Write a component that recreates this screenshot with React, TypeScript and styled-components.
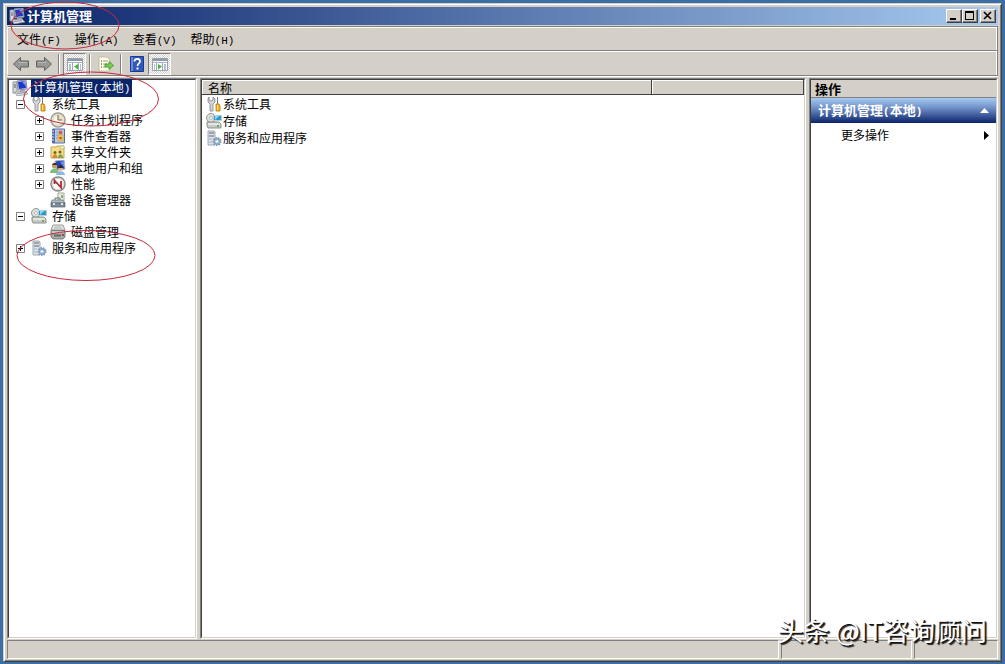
import React from 'react';
import styled, { createGlobalStyle, css } from 'styled-components';

const FACE = '#d4d0c8';
const SHADOW = '#808080';
const DARK = '#404040';
const NAVY = '#0a246a';

const GlobalStyle = createGlobalStyle`
  *, *::before, *::after { box-sizing: border-box; }
  html, body, #root { height: 100%; margin: 0; }
  body {
    background: #3a6ea5;
    color: #000;
    font-family: "Noto Sans CJK SC", "Liberation Sans", sans-serif;
    font-size: 12px;
    line-height: 16px;
  }
  button { font: inherit; color: inherit; margin: 0; padding: 0; border: 0; background: none; }
  svg { display: block; flex: none; }
`;

const raised = css`
  border: 1px solid;
  border-color: #fff ${DARK} ${DARK} #fff;
  box-shadow: inset -1px -1px ${SHADOW};
`;

const Desktop = styled.div`
  position: relative;
  display: flex;
  min-height: 100%;
  padding: 3px 3px 2px;
`;

const Window = styled.main`
  flex: 1;
  min-width: 0;
  display: flex;
  flex-direction: column;
  padding: 3px 3px 2px;
  background: ${FACE};
  border: 1px solid;
  border-color: ${FACE} ${DARK} ${DARK} ${FACE};
  box-shadow: inset 1px 1px #fff, inset -1px -1px ${SHADOW};
`;

const TitleBar = styled.header`
  display: flex;
  align-items: center;
  height: 18px;
  padding: 0 2px;
  gap: 2px;
  background: linear-gradient(90deg, ${NAVY}, #a6caf0);
`;

const Title = styled.h1`
  flex: 1;
  margin: 0;
  color: #fff;
  font-size: 13px;
  line-height: 18px;
`;

const CaptionButtons = styled.div`
  display: flex;
`;

const CaptionButton = styled.button<{ $apart?: boolean }>`
  ${raised}
  display: grid;
  place-items: center;
  width: 16px;
  height: 14px;
  margin-left: ${(p) => (p.$apart ? 2 : 0)}px;
  background: ${FACE};
`;

const Bars = styled.div`
  margin-top: 1px;
  border: 1px solid;
  border-color: ${SHADOW} ${SHADOW} ${SHADOW} #fff;
  box-shadow: inset 0 1px #fff, 0 1px #fff, inset -1px 0 #fff;
`;

const MenuBar = styled.nav`
  display: flex;
  height: 24px;
  padding: 0 2px;
  border-bottom: 1px solid ${SHADOW};
`;

const MenuItem = styled.button`
  padding: 2px 7px 0;
`;

const Latin = styled.span`
  font-family: "Liberation Mono", monospace;
  font-size: 11px;
`;

const ToolBar = styled.div`
  display: flex;
  align-items: center;
  height: 24px;
  padding: 0 1px;
  border-top: 1px solid #fff;
`;

const ToolButton = styled.button<{ $pressed?: boolean }>`
  display: grid;
  place-items: center;
  width: 23px;
  height: 22px;
  ${(p) =>
    p.$pressed &&
    css`
      border: 1px solid;
      border-color: ${SHADOW} #fff #fff ${SHADOW};
      background: repeating-conic-gradient(#fff 0 25%, ${FACE} 0 50%) 0 0 / 2px 2px;
    `}
`;

const ToolSeparator = styled.span`
  width: 2px;
  height: 20px;
  margin: 0 3px;
  border-left: 1px solid ${SHADOW};
  border-right: 1px solid #fff;
`;

const Panes = styled.div`
  flex: 1;
  display: flex;
  gap: 3px;
  margin-top: 2px;
`;

const pane = css`
  display: flex;
  flex-direction: column;
  min-width: 0;
  background: #fff;
  border: 1px solid;
  border-color: ${SHADOW} #fff #fff ${SHADOW};
`;

const PaneInner = styled.div`
  flex: 1;
  border: 1px solid;
  border-color: ${DARK} ${FACE} ${FACE} ${DARK};
`;

const TreePane = styled.nav`
  ${pane}
  flex: 0 0 190px;
`;

const ListPane = styled.section`
  ${pane}
  flex: 1;
`;

const ActionPane = styled.aside`
  ${pane}
  flex: 0 0 189px;
`;

const Tree = styled.ul`
  margin: 0;
  padding: 0;
  list-style: none;
`;

const TreeRow = styled.div<{ $level: number }>`
  display: flex;
  align-items: center;
  height: 16px;
  padding-left: ${(p) => (p.$level ? p.$level * 19 - 12 : 3)}px;
`;

const ExpanderSlot = styled.span`
  width: 15px;
`;

const Expander = styled.button`
  display: block;
`;

const TreeLabel = styled.span<{ $selected?: boolean }>`
  margin-left: 3px;
  padding: 0 2px;
  white-space: nowrap;
  ${(p) => p.$selected && css`background: ${NAVY}; color: #fff;`}
`;

const ListTable = styled.table`
  width: 100%;
  table-layout: fixed;
  border-collapse: collapse;
`;

const ColumnHead = styled.th<{ $width?: number }>`
  width: ${(p) => (p.$width ? p.$width + 'px' : 'auto')};
  height: 15px;
  padding: 0 6px;
  background: ${FACE};
  text-align: left;
  font-weight: normal;
  line-height: 15px;
  box-shadow: inset -1px -1px ${DARK}, inset 1px 1px #fff;
`;

const ListCell = styled.td`
  height: 17px;
  padding: 0 4px;
`;

const ListItem = styled.div`
  display: flex;
  align-items: center;
  gap: 1px;
`;

const ActionTitle = styled.h2`
  height: 18px;
  margin: 0;
  padding-left: 4px;
  background: ${FACE};
  border-bottom: 1px solid ${SHADOW};
  font-size: 13px;
  line-height: 17px;
`;

const ActionGroup = styled.button`
  display: flex;
  align-items: center;
  justify-content: space-between;
  width: 100%;
  height: 25px;
  padding: 0 7px;
  background: linear-gradient(#a6caf0, #6f8fc8 40%, ${NAVY});
  color: #fff;
  font-size: 13px;
  font-weight: bold;
`;

const GroupLatin = styled(Latin)`
  font-weight: bold;
`;

const ActionRow = styled.button`
  display: flex;
  align-items: center;
  justify-content: space-between;
  width: 100%;
  height: 24px;
  padding: 0 7px 0 30px;
`;

const StatusBar = styled.footer`
  display: flex;
  gap: 2px;
  height: 19px;
  margin-top: 1px;
`;

const StatusCell = styled.div<{ $width?: number }>`
  flex: ${(p) => (p.$width ? `0 0 ${p.$width}px` : '1')};
  border: 1px solid;
  border-color: ${SHADOW} #fff #fff ${SHADOW};
`;

const Marks = styled.svg`
  position: absolute;
  top: 0;
  left: 0;
  pointer-events: none;
  fill: none;
  stroke: #c8283c;
`;

const Watermark = styled.p`
  position: absolute;
  right: 18px;
  bottom: 18px;
  margin: 0;
  color: #fff;
  font-size: 26px;
  line-height: 32px;
  text-shadow: 1px 1px #111, 2px 2px 1px #222;
`;

type IconName =
  | 'computer' | 'tools' | 'clock' | 'events' | 'share' | 'users'
  | 'perf' | 'device' | 'storage' | 'disk' | 'services';

const drawings: Record<IconName, React.ReactNode> = {
  computer: (
    <>
      <path d="M1 2h4v11H1z" fill="#d9dce0" stroke="#8c9096" />
      <path d="M2 5h2M2 7h2" stroke="#555" />
      <path d="M5 1l9-1 1 9-9 1z" fill="#c8cfd8" stroke="#8290a4" />
      <path d="M6 2l7-1 1 7-7 1z" fill="#2038c8" />
      <path d="M10 2l3-1 1 5z" fill="#7c9cf0" />
      <path d="M8 10h5l1 2H8z" fill="#a4a8ae" />
      <path d="M3 12l10-1 3 3-11 2z" fill="#dfe2e6" stroke="#8c9096" strokeWidth=".7" />
      <path d="M5 13.500l8-1" stroke="#667" strokeWidth=".7" />
    </>
  ),
  tools: (
    <>
      <path d="M3 1v3l2 1 2-1V1l2 2v3L7 8v7H4V8L2 6V3z" fill="#d4d7da" stroke="#7b8086" strokeWidth=".8" />
      <path d="M11.500 1v7" stroke="#777" />
      <path d="M10 8h3l1 2v5h-4v-5z" fill="#f6b325" stroke="#b87408" strokeWidth=".8" />
      <path d="M11.500 9v5" stroke="#ffe48a" />
    </>
  ),
  clock: (
    <>
      <circle cx="8" cy="8" r="7" fill="#f2eee2" stroke="#9b9b98" strokeWidth="1.500" />
      <circle cx="8" cy="8" r="5" fill="#fbf7e6" stroke="#d8cfb4" />
      <path d="M8 8h5V4L8 3z" fill="#f0dfb4" />
      <path d="M8 3v5h4" stroke="#666" fill="none" />
    </>
  ),
  events: (
    <>
      <path d="M2.500 1h12v14h-12z" fill="#b9cbea" stroke="#5a6c9c" />
      <path d="M2 1h3v14H2z" fill="#5369a5" />
      <path d="M1 3h3M1 6h3M1 9h3M1 12h3" stroke="#dfe5f4" />
      <path d="M6 4h2M6 7h2M6 10h2" stroke="#8797bd" />
      <circle cx="10.500" cy="4.500" r="2" fill="#d25c4c" />
      <path d="M8 7h5v6H8z" fill="#f4cf4c" stroke="#c09a34" strokeWidth=".6" />
      <circle cx="10.500" cy="10" r="1.300" fill="#c8402c" />
    </>
  ),
  share: (
    <>
      <path d="M1 3h5l1-1h7v12H1z" fill="#f6dd88" stroke="#c5a551" />
      <path d="M10 2h4v3h-4z" fill="#fff2bd" stroke="#9fc08a" strokeWidth=".7" />
      <circle cx="5" cy="8.500" r="1.500" fill="#7d6028" />
      <circle cx="10" cy="8" r="1.500" fill="#7d6028" />
      <path d="M2.500 14c0-5 5-5 5 0z" fill="#c98a3c" />
      <path d="M8 14c0-5 5-5 5 0z" fill="#7fa64c" />
    </>
  ),
  users: (
    <>
      <path d="M5 1l9-1 1 9-8 1z" fill="#2845b8" stroke="#a8b4c8" />
      <path d="M10 2l4-1v6z" fill="#6f90e6" />
      <circle cx="4.500" cy="6" r="2.500" fill="#c99b6b" />
      <path d="M2 5c1-3 5-3 5 0z" fill="#47341f" />
      <path d="M0 13c0-6 9-6 9 0z" fill="#7fbf7c" />
      <circle cx="10.500" cy="8.500" r="2.300" fill="#d9ae82" />
      <path d="M8 8c1-4 5-3 5 0z" fill="#33261c" />
      <path d="M6 15c0-5 9-5 9 0z" fill="#8db8e0" />
    </>
  ),
  perf: (
    <>
      <circle cx="8" cy="8" r="7" fill="#fff" stroke="#888" strokeWidth="1.500" />
      <circle cx="8" cy="8" r="5.500" fill="#fff" stroke="#d3d3d3" />
      <path d="M4.500 8V4.500l6.500 7V5" fill="none" stroke="#c42128" strokeWidth="1.800" />
      <path d="M5 5l6 7" stroke="#555" strokeWidth=".7" />
    </>
  ),
  device: (
    <>
      <path d="M8 1h6v8H8z" fill="#eef0e8" stroke="#a1a69b" />
      <path d="M11 3h2v3h-2z" fill="#8cac68" />
      <path d="M5 8V6h5v2" fill="none" stroke="#65717b" />
      <path d="M2 8h11l2 3H1z" fill="#b3bdc6" stroke="#68747f" strokeWidth=".7" />
      <path d="M1 11h14v4H1z" fill="#7f8c98" stroke="#55616d" strokeWidth=".7" />
      <path d="M3 11h2v2H3zM11 11h2v2h-2z" fill="#dde4e9" />
    </>
  ),
  storage: (
    <>
      <circle cx="5" cy="5" r="4.500" fill="#dde0dc" stroke="#92968f" />
      <circle cx="5" cy="5" r="1.500" fill="#fff" stroke="#a5aaa4" strokeWidth=".7" />
      <path d="M7.500 2.500h8v5h-8z" fill="#279dcc" stroke="#c0cbd0" />
      <path d="M9 3h4L9 7z" fill="#8bdaf1" />
      <path d="M1 9h12l2 2v4H2l-1-2z" fill="#c8ccc8" stroke="#747b74" strokeWidth=".8" />
      <path d="M2 11h12" stroke="#fff" />
      <path d="M11 12h2v2h-2z" fill="#66b44f" />
    </>
  ),
  disk: (
    <>
      <path d="M3 1h10l2 5H1z" fill="#e4e6e3" stroke="#9a9e98" />
      <ellipse cx="8" cy="4" rx="4" ry="2" fill="#c7cbc7" />
      <path d="M1 6.500h14V13l-2 2H3l-2-2z" fill="#a9ada9" stroke="#666b65" strokeWidth=".8" />
      <path d="M2 8h12" stroke="#e3e6e2" />
      <path d="M4 11.500h7" stroke="#686c68" strokeWidth="2" />
      <path d="M12 10h2v2h-2z" fill="#9c4a43" />
    </>
  ),
  services: (
    <>
      <path d="M2 1h6l1 1v13H2z" fill="#dce2e7" stroke="#9ba8b4" />
      <path d="M3 3h5M3 6h5" stroke="#5e6870" />
      <path d="M3 9h3M3 12h3" stroke="#a7b2bb" />
      <circle cx="11" cy="11.500" r="3.600" fill="#a5bedb" stroke="#7593b8" strokeWidth="1.800" strokeDasharray="1.500 1" />
      <circle cx="11" cy="11.500" r="2.500" fill="#bed1e5" stroke="#7593b8" strokeWidth=".8" />
      <circle cx="11" cy="11.500" r="1" fill="#fff" />
    </>
  ),
};

const Icon = ({ name }: { name: IconName }) => (
  <svg width="16" height="16" viewBox="0 0 16 16" fill="none" aria-hidden="true">
    {drawings[name]}
  </svg>
);

const ArrowIcon = ({ forward }: { forward?: boolean }) => (
  <svg width="18" height="16" viewBox="0 0 18 16" aria-hidden="true">
    <path
      d={forward ? 'M16.500 8L9.500 1.500v3.500H1.500v6h8v3.500z' : 'M1.500 8l7-6.500v3.500h8v6h-8v3.500z'}
      fill="#999" stroke="#5f5f5f"
    />
    <path d={forward ? 'M3 6.500h8' : 'M7 6.500h8'} stroke="#bbb" />
  </svg>
);

const PanelIcon = ({ right }: { right?: boolean }) => (
  <svg width="16" height="16" viewBox="0 0 16 16" fill="none" aria-hidden="true">
    <path d="M.5 2.500h15v12H.5z" fill="#fff" stroke="#98a3b3" />
    <path d="M1 3h14v2H1z" fill="#8b9ab0" />
    <path d="M1 6.500h14" stroke="#aab3c0" />
    <path d={right ? 'M4.500 7v7M10.500 7v7' : 'M5.500 7v7M11.500 7v7'} stroke="#9ba6b6" />
    <path d={right ? 'M12 9h2M12 11h2M12 13h2M2 9h1M2 11h1M2 13h1' : 'M2 9h2M2 11h2M2 13h2M13 9h1M13 11h1M13 13h1'} stroke="#66809f" />
    <path d={right ? 'M6 8l4 2.500-4 3z' : 'M11 8l-4 2.500 4 3z'} fill="#3fb53b" />
  </svg>
);

const ExportIcon = () => (
  <svg width="16" height="16" viewBox="0 0 16 16" fill="none" aria-hidden="true">
    <path d="M1 1h8l3 3v11H1z" fill="#fffde9" stroke="#c3bd98" />
    <path d="M3 5h1M3 8h1M3 11h1" stroke="#333" />
    <path d="M5 5h5M5 8h4M5 11h3" stroke="#9a9a8d" />
    <path d="M7 8h4V5.500l4.500 4-4.500 4V11H7z" fill="#74cc50" stroke="#399522" strokeWidth=".8" />
  </svg>
);

const HelpIcon = () => (
  <svg width="14" height="16" viewBox="0 0 14 16" fill="none" aria-hidden="true">
    <path d="M.5.5h13v15H.5z" fill="#3159bd" stroke="#18398f" />
    <path d="M1 1h2v14H1z" fill="#6d8ad8" />
    <path d="M4.500 5.500C4.500 2 10 2 10 5.500 10 7.500 7.500 7.500 7.500 10" stroke="#fff" strokeWidth="1.700" />
    <path d="M6.500 11.500h2v2h-2z" fill="#fff" />
  </svg>
);

interface Node {
  label: string;
  latin?: boolean;
  icon: IconName;
  state?: 'open' | 'closed';
  children?: Node[];
}

const root: Node = {
  label: '计算机管理',
  latin: true,
  icon: 'computer',
  children: [
    {
      label: '系统工具', icon: 'tools', state: 'open',
      children: [
        { label: '任务计划程序', icon: 'clock', state: 'closed' },
        { label: '事件查看器', icon: 'events', state: 'closed' },
        { label: '共享文件夹', icon: 'share', state: 'closed' },
        { label: '本地用户和组', icon: 'users', state: 'closed' },
        { label: '性能', icon: 'perf', state: 'closed' },
        { label: '设备管理器', icon: 'device' },
      ],
    },
    { label: '存储', icon: 'storage', state: 'open', children: [{ label: '磁盘管理', icon: 'disk' }] },
    { label: '服务和应用程序', icon: 'services', state: 'closed' },
  ],
};

const TreeNode = ({ node, level }: { node: Node; level: number }) => (
  <li>
    <TreeRow $level={level}>
      {level > 0 && (
        <ExpanderSlot>
          {node.state && (
            <Expander aria-label={node.label} aria-expanded={node.state === 'open'}>
              <svg width="9" height="9" viewBox="0 0 9 9" fill="#fff" stroke="#808080">
                <path d="M.5.5h8v8h-8z" />
                <path d={node.state === 'open' ? 'M2 4.500h5' : 'M2 4.500h5M4.500 2v5'} stroke="#000" />
              </svg>
            </Expander>
          )}
        </ExpanderSlot>
      )}
      <Icon name={node.icon} />
      <TreeLabel $selected={level === 0}>
        {node.label}
        {node.latin && <><Latin>(</Latin>本地<Latin>)</Latin></>}
      </TreeLabel>
    </TreeRow>
    {node.children && (
      <Tree>
        {node.children.map((child) => <TreeNode key={child.label} node={child} level={level + 1} />)}
      </Tree>
    )}
  </li>
);

const menus = [['文件', 'F'], ['操作', 'A'], ['查看', 'V'], ['帮助', 'H']];

const App = () => (
  <Desktop>
    <GlobalStyle />
    <Window>
      <TitleBar>
        <Icon name="computer" />
        <Title>计算机管理</Title>
        <CaptionButtons>
          <CaptionButton aria-label="最小化">
            <svg width="10" height="10"><path d="M1 7h6v2H1z" /></svg>
          </CaptionButton>
          <CaptionButton aria-label="最大化">
            <svg width="10" height="10"><path d="M0 0h9v9H0zM1 2v6h7V2z" fillRule="evenodd" /></svg>
          </CaptionButton>
          <CaptionButton $apart aria-label="关闭">
            <svg width="10" height="10"><path d="M1 1l7 7M8 1l-7 7" stroke="#000" strokeWidth="1.600" /></svg>
          </CaptionButton>
        </CaptionButtons>
      </TitleBar>

      <Bars>
        <MenuBar>
          {menus.map(([label, key]) => (
            <MenuItem key={key}>{label}<Latin>({key})</Latin></MenuItem>
          ))}
        </MenuBar>
        <ToolBar>
          <ToolButton aria-label="后退"><ArrowIcon /></ToolButton>
          <ToolButton aria-label="前进"><ArrowIcon forward /></ToolButton>
          <ToolSeparator />
          <ToolButton $pressed aria-label="显示控制台树"><PanelIcon /></ToolButton>
          <ToolSeparator />
          <ToolButton aria-label="导出列表"><ExportIcon /></ToolButton>
          <ToolSeparator />
          <ToolButton aria-label="帮助"><HelpIcon /></ToolButton>
          <ToolButton $pressed aria-label="显示操作窗格"><PanelIcon right /></ToolButton>
        </ToolBar>
      </Bars>

      <Panes>
        <TreePane>
          <PaneInner>
            <Tree><TreeNode node={root} level={0} /></Tree>
          </PaneInner>
        </TreePane>
        <ListPane>
          <PaneInner>
            <ListTable>
              <thead>
                <tr><ColumnHead $width={450}>名称</ColumnHead><ColumnHead /></tr>
              </thead>
              <tbody>
                {root.children!.map((item) => (
                  <tr key={item.label}>
                    <ListCell colSpan={2}>
                      <ListItem><Icon name={item.icon} />{item.label}</ListItem>
                    </ListCell>
                  </tr>
                ))}
              </tbody>
            </ListTable>
          </PaneInner>
        </ListPane>
        <ActionPane>
          <PaneInner>
            <ActionTitle>操作</ActionTitle>
            <ActionGroup aria-expanded="true">
              <span>计算机管理<GroupLatin>(</GroupLatin>本地<GroupLatin>)</GroupLatin></span>
              <svg width="9" height="5"><path d="M0 5l4.500-5L9 5z" fill="#fff" /></svg>
            </ActionGroup>
            <ActionRow>
              更多操作
              <svg width="5" height="9"><path d="M0 0l5 4.500L0 9z" /></svg>
            </ActionRow>
          </PaneInner>
        </ActionPane>
      </Panes>

      <StatusBar>
        <StatusCell />
        <StatusCell $width={131} />
        <StatusCell $width={84} />
      </StatusBar>
    </Window>

    <Marks width="170" height="290" aria-hidden="true">
      <ellipse cx="65" cy="25.500" rx="54" ry="23.500" />
      <ellipse cx="91" cy="99" rx="67.500" ry="27" />
      <ellipse cx="86" cy="255.500" rx="69" ry="25" />
    </Marks>
    <Watermark>头条 @IT咨询顾问</Watermark>
  </Desktop>
);

export default App;
